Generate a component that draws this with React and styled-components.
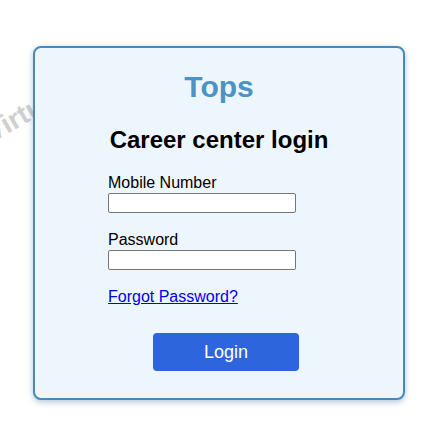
import React from 'react';
import styled, { createGlobalStyle } from 'styled-components';

const GlobalStyle = createGlobalStyle`
  html, body {
    margin: 0;
    padding: 0;
    background: #ffffff;
    font-family: "Liberation Sans", Arial, sans-serif;
  }
`;

const Page = styled.div`
  position: relative;
  width: 444px;
  height: 430px;
  overflow: hidden;
  padding: 46px 0 0 33px;
  box-sizing: border-box;
`;

const Watermark = styled.div`
  position: absolute;
  left: -8px;
  top: 120px;
  font-size: 28px;
  line-height: 28px;
  font-weight: 700;
  color: #cfcfcf;
  white-space: nowrap;
  transform-origin: 0 24px;
  transform: rotate(-30deg);
  z-index: 0;
`;

const Card = styled.div`
  position: relative;
  z-index: 1;
  width: 372px;
  box-sizing: border-box;
  border: 2px solid #4789bd;
  border-radius: 8px;
  background: #eef6fd;
  box-shadow: 0 2px 6px rgba(60, 110, 150, 0.4);
  padding: 21px 0 27px 73px;
`;

const Brand = styled.h1`
  margin: 0 0 21px -73px;
  font-size: 30px;
  line-height: 36px;
  font-weight: 700;
  color: #4b93c5;
  text-align: center;
`;

const Heading = styled.h2`
  margin: 0 0 20px -73px;
  font-size: 24px;
  line-height: 28px;
  font-weight: 700;
  color: #000;
  text-align: center;
`;

const Form = styled.form`
  display: flex;
  flex-direction: column;
  align-items: flex-start;
`;

const Field = styled.div`
  display: flex;
  flex-direction: column;
  gap: 1px;
  margin-bottom: 18px;
`;

const Label = styled.label`
  font-size: 16px;
  line-height: 18px;
  color: #000;
`;

const Input = styled.input`
  width: 188px;
  height: 20px;
  box-sizing: border-box;
  border: 1px solid #767676;
  border-radius: 2px;
  background: #fff;
  padding: 1px 2px;
  font-size: 13px;
  font-family: inherit;
`;

const ForgotLink = styled.a`
  font-size: 16px;
  line-height: 18px;
  color: #0000ee;
  text-decoration: underline;
`;

const LoginButton = styled.button`
  margin: 27px 0 0 45px;
  width: 146px;
  height: 38px;
  border: none;
  border-radius: 4px;
  background: #2d65dc;
  color: #fff;
  font-family: inherit;
  font-size: 18px;
  cursor: pointer;
`;

export default function App() {
  return (
    <>
      <GlobalStyle />
      <Page>
        <Watermark>Virtual</Watermark>
        <Card>
          <Brand>Tops</Brand>
          <Heading>Career center login</Heading>
          <Form onSubmit={e => e.preventDefault()}>
            <Field>
              <Label htmlFor="mobile">Mobile Number</Label>
              <Input id="mobile" type="text" />
            </Field>
            <Field>
              <Label htmlFor="password">Password</Label>
              <Input id="password" type="password" />
            </Field>
            <ForgotLink href="#">Forgot Password?</ForgotLink>
            <LoginButton type="submit">Login</LoginButton>
          </Form>
        </Card>
      </Page>
    </>
  );
}
